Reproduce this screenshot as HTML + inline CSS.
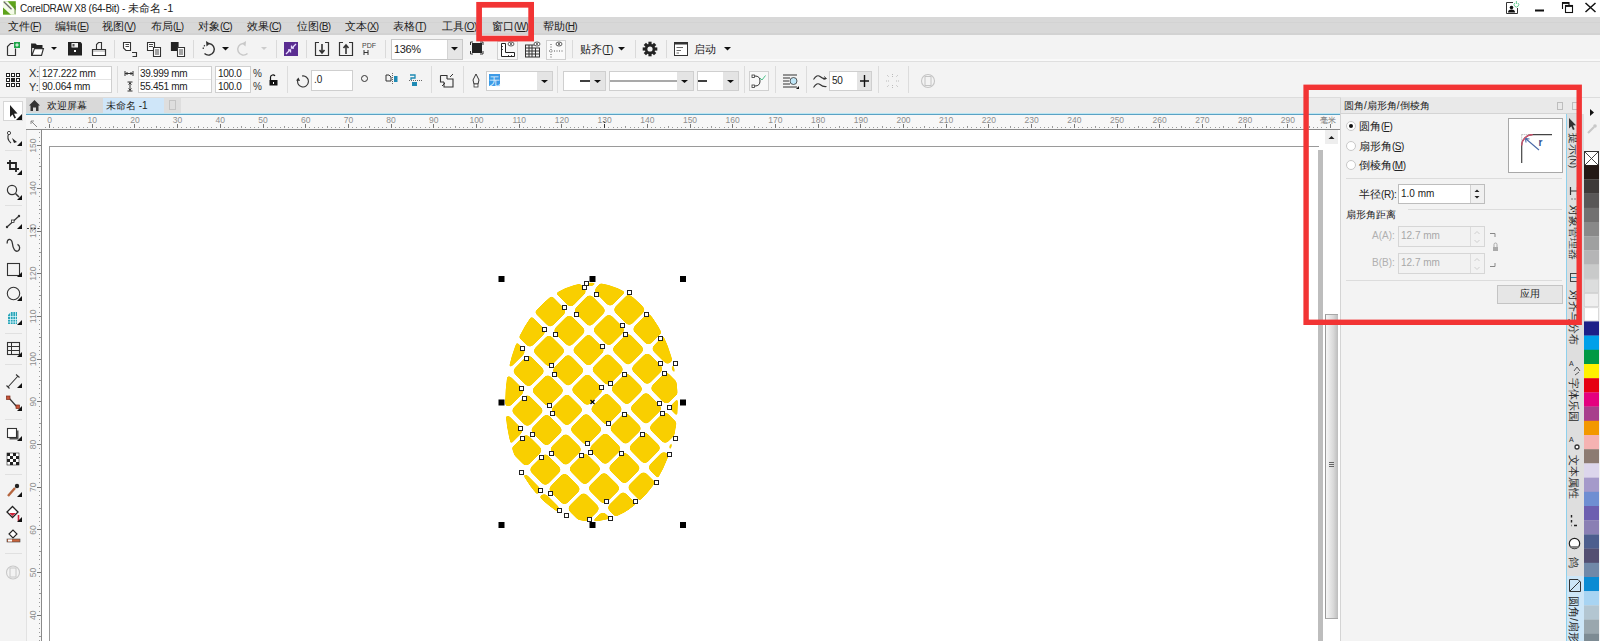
<!DOCTYPE html>
<html><head><meta charset="utf-8">
<style>
*{margin:0;padding:0;box-sizing:border-box}
html,body{width:1600px;height:641px;overflow:hidden;background:#fff;font-family:"Liberation Sans",sans-serif;color:#222}
.a{position:absolute}
.t{position:absolute;white-space:nowrap;font-size:11px;line-height:12px}
</style></head><body>
<!-- title bar -->
<div class="a" style="left:0;top:0;width:1600px;height:17px;background:#fff"></div>
<!-- menu bar -->
<div class="a" style="left:0;top:17px;width:1600px;height:18px;background:#d8d8d8"></div><div class="a" style="left:0;top:22px;width:1600px;height:1px;background:#d3d3d3"></div><div class="a" style="left:0;top:33px;width:1600px;height:2px;background:#d2d2d2"></div>

<!-- app icon -->
<svg class="a" style="left:0;top:0" width="18" height="17" viewBox="0 0 18 17"><rect x="3" y="1.2" width="12.8" height="13.5" fill="#5ea31c"/><path d="M3 1.2 H7.5 L15.8 10.5 V14.7 H11 L3 7.5 Z" fill="#f4fbe8"/><path d="M3.8 1.8 L11.5 9.3" stroke="#6b6b6b" stroke-width="1.3"/><path d="M15 6 V14" stroke="#4a7a2a" stroke-width="0.8"/></svg>
<div class="t" style="left:20px;top:2px;font-size:11px;color:#222"><span style="font-size:10px;letter-spacing:-0.25px">CorelDRAW X8 (64-Bit) - </span>未命名 -1</div>
<!-- window controls -->
<svg class="a" style="left:1500px;top:0" width="100" height="17" viewBox="1500 0 100 17">
 <path d="M1513 2.5 H1506.5 V13.5 H1517.5 V8" fill="none" stroke="#333" stroke-width="1"/>
 <circle cx="1511.5" cy="7.5" r="1.8" fill="#111"/>
 <path d="M1508 12.5 Q1508 9.5 1511.5 9.5 Q1515 9.5 1515 12.5 Z" fill="#111"/>
 <path d="M1514.8 3 A2.3 2.3 0 1 0 1518 3" fill="none" stroke="#5cc98a" stroke-width="0.9"/><path d="M1516.4 1 V4" stroke="#5cc98a" stroke-width="0.9"/>
 <rect x="1535" y="9.5" width="9" height="2" fill="#111"/>
 <path d="M1562.5 9 V2.5 H1569 V5.5" fill="none" stroke="#111" stroke-width="1.1"/><rect x="1562.5" y="2.3" width="6.5" height="1.6" fill="#111"/>
 <rect x="1565.5" y="5.5" width="7" height="7" fill="#fff" stroke="#111" stroke-width="1.1"/><rect x="1565.5" y="5.3" width="7" height="1.6" fill="#111"/>
 <path d="M1585.5 3 L1595.5 12 M1595.5 3 L1585.5 12" stroke="#111" stroke-width="1.5"/>
</svg>
<!-- menu -->
<div class="t" style="left:8px;top:20px;font-size:11px">文件<span style="font-size:10px;letter-spacing:-0.6px">(<u>F</u>)</span></div>
<div class="t" style="left:55px;top:20px;font-size:11px">编辑<span style="font-size:10px;letter-spacing:-0.6px">(<u>E</u>)</span></div>
<div class="t" style="left:102px;top:20px;font-size:11px">视图<span style="font-size:10px;letter-spacing:-0.6px">(<u>V</u>)</span></div>
<div class="t" style="left:151px;top:20px;font-size:11px">布局<span style="font-size:10px;letter-spacing:-0.6px">(<u>L</u>)</span></div>
<div class="t" style="left:198px;top:20px;font-size:11px">对象<span style="font-size:10px;letter-spacing:-0.6px">(<u>C</u>)</span></div>
<div class="t" style="left:247px;top:20px;font-size:11px">效果<span style="font-size:10px;letter-spacing:-0.6px">(<u>C</u>)</span></div>
<div class="t" style="left:297px;top:20px;font-size:11px">位图<span style="font-size:10px;letter-spacing:-0.6px">(<u>B</u>)</span></div>
<div class="t" style="left:345px;top:20px;font-size:11px">文本<span style="font-size:10px;letter-spacing:-0.6px">(<u>X</u>)</span></div>
<div class="t" style="left:393px;top:20px;font-size:11px">表格<span style="font-size:10px;letter-spacing:-0.6px">(<u>T</u>)</span></div>
<div class="t" style="left:442px;top:20px;font-size:11px">工具<span style="font-size:10px;letter-spacing:-0.6px">(<u>O</u>)</span></div>
<div class="t" style="left:492px;top:20px;font-size:11px">窗口<span style="font-size:10px;letter-spacing:-0.6px">(<u>W</u>)</span></div>
<div class="t" style="left:543px;top:20px;font-size:11px">帮助<span style="font-size:10px;letter-spacing:-0.6px">(<u>H</u>)</span></div>
<!-- toolbar 1 -->
<div class="a" style="left:0;top:35px;width:1600px;height:27px;background:#f3f3f3;border-bottom:1px solid #dfdfdf"></div><div class="a" style="left:0;top:59px;width:1600px;height:2px;background:#f9f9f9"></div>
<!-- property bar -->
<div class="a" style="left:0;top:62px;width:1600px;height:36px;background:#f3f3f3;border-bottom:1px solid #dcdcdc"></div>

<!-- toolbar1 icons -->
<svg class="a" style="left:0;top:35px" width="800" height="26" viewBox="0 35 800 26">
<g fill="none" stroke="#333" stroke-width="1.2">
 <!-- new -->
 <path d="M7.5 55.5 V46.5 L10.5 43.5 H13.5 M15.5 48.5 V55.5 H7.5" stroke-width="1.2"/>
 <rect x="14" y="42" width="6" height="6" fill="#1fa64a" stroke="none"/>
 <path d="M17 43.3 V46.7 M15.3 45 H18.7" stroke="#fff" stroke-width="1"/>
 <!-- open -->
 <path d="M31 43.5 H35.5 L37 45 H42.5 V48 H31 Z" fill="#222" stroke="none"/>
 <path d="M31.6 44 V55.4 H41.5 L43.4 48.6 H34.5 L32 55.4" stroke-width="1.2" fill="#fff"/>
 <path d="M51 47 H57 L54 50 Z" fill="#111" stroke="none"/>
 <!-- save -->
 <path d="M68 42 H80.5 L82 43.5 V55.5 H68 Z" fill="#222" stroke="none"/>
 <rect x="71.5" y="43" width="6.5" height="4.5" fill="#f3f3f3" stroke="none"/>
 <rect x="72.5" y="44" width="2" height="2.5" fill="#555" stroke="none"/>
 <rect x="74" y="50" width="2" height="2" fill="#fff" stroke="none"/>
 <!-- print -->
 <path d="M96.5 50 V44.5 L98.5 42.5 H101.5 V50" stroke-width="1.1"/>
 <path d="M92.5 49.5 H105.5 V55.5 H92.5 Z" stroke-width="1.2" fill="#fff"/>
 <path d="M93 51 H105" stroke="#888" stroke-width="0.8"/>
 <!-- separators -->
 <path d="M114.5 40 V58 M193.5 40 V58 M276.5 40 V58 M306.5 40 V58 M385.5 40 V58 M572.5 40 V58 M635.5 40 V58 M666.5 40 V58" stroke="#dadada" stroke-width="1"/>
 <!-- import-ish docs -->
 <path d="M123.5 42.5 H130.5 V50.5 H126 L123.5 48 Z" fill="#fff" stroke-width="1.1"/>
 <path d="M125.5 44.5 H129 M125.5 46.5 H129" stroke-width="0.9"/>
 <path d="M132 52.5 H136.5 V56.5 H132.5" stroke-width="1.1"/>
 <path d="M147.5 42.5 H154.5 V50.5 H147.5 Z" fill="#fff" stroke-width="1.1"/>
 <path d="M149 44.5 H153 M149 46.5 H153" stroke-width="0.9"/>
 <path d="M153.5 47.5 H160.5 V56.5 H153.5 Z" fill="#fff" stroke-width="1.1"/>
 <path d="M155 50 H159 M155 52 H159 M155 54 H159" stroke-width="0.9"/>
 <path d="M171.5 42.5 H178 V50.5 H171.5 Z" fill="#222" stroke="#222"/>
 <path d="M177.5 47.5 H184.5 V56.5 H177.5 Z" fill="#fff" stroke-width="1.1"/>
 <path d="M179 50 H183 M179 52 H183 M179 54 H183" stroke-width="0.9"/>
 <!-- undo -->
 <path d="M209 43.5 A5.8 5.8 0 1 1 204.5 53.5" stroke-width="1.4"/>
 <path d="M203.2 49 A5.8 5.8 0 0 1 205 45" stroke-width="1.2" stroke-dasharray="1.5 1.2"/>
 <path d="M206 41 L210 43.5 L206.5 46.5 Z" fill="#333" stroke="none"/>
 <path d="M222 47 H229 L225.5 50.5 Z" fill="#111" stroke="none"/>
 <!-- redo disabled -->
 <path d="M243 43.5 A5.8 5.8 0 1 0 247.5 53.5" stroke="#c8c8c8" stroke-width="1.4"/><path d="M246 41 L242 43.5 L245.5 46.5 Z" fill="#c8c8c8" stroke="none"/>
 <path d="M261 47 H267 L264 50 Z" fill="#ccc" stroke="none"/>
 <!-- purple -->
 <rect x="284" y="42" width="14" height="14" fill="#5a2d91" stroke="none"/>
 <path d="M286 54 L290 50 M296 44 L292 48" stroke="#e8dcff" stroke-width="1.3"/><path d="M288 50 H290.5 V52.5 M294 48 H291.5 V45.5" stroke="#e8dcff" stroke-width="1.3"/>
 <!-- import/export -->
 <path d="M319 42.5 H315.5 V55.5 H328.5 V42.5 H325" stroke-width="1.2"/>
 <path d="M322 44 V52 M319.5 50 L322 53 L324.5 50" stroke-width="1.6"/>
 <path d="M343 42.5 H339.5 V55.5 H352.5 V42.5 H349" stroke-width="1.2"/>
 <path d="M346 46 V54 M343.5 48 L346 45 L348.5 48" stroke-width="1.6"/>
 <!-- pdf -->
 <text x="362" y="48" font-size="7" font-family="Liberation Sans" fill="#444" stroke="none">PDF</text>
 <path d="M364 50 V55 M368 50 V55 M364 52.5 H368" stroke-width="1"/>
</g>
</svg>
<!-- zoom box -->
<div class="a" style="left:391px;top:39px;width:72px;height:21px;background:#fff;border:1px solid #c8c8c8"></div>
<div class="a" style="left:447px;top:40px;width:15px;height:19px;background:#e6e6e6;border-left:1px solid #d4d4d4"></div>
<div class="t" style="left:394px;top:43px;font-size:11px;letter-spacing:-0.4px;color:#222">136%</div>
<svg class="a" style="left:447px;top:40px" width="15" height="19"><path d="M4 7 H11 L7.5 10.5 Z" fill="#111"/></svg>
<svg class="a" style="left:460px;top:35px" width="300" height="26" viewBox="460 35 300 26">
 <!-- fullscreen -->
 <rect x="472" y="43" width="10" height="10" fill="#222"/>
 <path d="M470.5 45 V42 H473 M480 42 H483 V45 M483 51 V54 H480 M473 54 H470.5 V51" fill="none" stroke="#333"/>
 <!-- rulers (selected) -->
 <rect x="497.5" y="41.5" width="20" height="18" fill="#f8f8f8" stroke="#d0d0d0"/>
 <path d="M501.5 43.5 V56.5 H514.5 V52.5 H505.5 V43.5 Z" fill="#fff" stroke="#222" stroke-width="1"/>
 <path d="M501.5 46.5 H503 M501.5 49.5 H503 M508.5 56.5 V55 M511.5 56.5 V55" stroke="#222" stroke-width="0.8"/>
 <ellipse cx="511" cy="44" rx="3" ry="2" fill="#fff" stroke="#333" stroke-width="0.8"/><circle cx="511" cy="44" r="0.9" fill="#333"/>
 <!-- grid -->
 <path d="M525 45 H537 M525 48 H540 M525 51 H540 M525 54 H540 M525 57 H540 M525.5 45 V57 M529 45 V57 M532 45 V57 M535.5 48 V57 M539.5 48 V57" fill="none" stroke="#333" stroke-width="1"/>
 <ellipse cx="537" cy="44" rx="3" ry="2" fill="#fff" stroke="#333" stroke-width="0.8"/><circle cx="537" cy="44" r="0.9" fill="#333"/>
 <!-- guides -->
 <rect x="546.5" y="40.5" width="19" height="19" fill="#fafafa" stroke="#d0d0d0"/>
 <path d="M551 44 V58 M549 51 H563" fill="none" stroke="#555" stroke-dasharray="1 1.5"/>
 <ellipse cx="559" cy="44" rx="3" ry="2" fill="#fff" stroke="#333" stroke-width="0.8"/><circle cx="559" cy="44" r="0.9" fill="#333"/>
 <!-- snap arrow -->
 <path d="M618 47 H625 L621.5 50.5 Z" fill="#111"/>
 <!-- gear -->
 <g transform="translate(650 49)">
  <circle r="5.2" fill="#222"/>
  <g fill="#222"><rect x="-1.6" y="-7.3" width="3.2" height="3"/><rect x="-1.6" y="4.3" width="3.2" height="3"/><rect x="-7.3" y="-1.6" width="3" height="3.2"/><rect x="4.3" y="-1.6" width="3" height="3.2"/>
  <g transform="rotate(45)"><rect x="-1.6" y="-7.3" width="3.2" height="3"/><rect x="-1.6" y="4.3" width="3.2" height="3"/><rect x="-7.3" y="-1.6" width="3" height="3.2"/><rect x="4.3" y="-1.6" width="3" height="3.2"/></g></g>
  <circle r="2.6" fill="#f2f2f2"/>
 </g>
 <!-- window icon -->
 <rect x="674.5" y="42.5" width="13" height="13" fill="#fff" stroke="#333"/>
 <rect x="674.5" y="42.5" width="13" height="2" fill="#333"/>
 <path d="M676.5 47.5 H683 M676.5 50.5 H681 M676.5 53 H679" stroke="#444" stroke-width="0.8"/>
 <path d="M724 47 H731 L727.5 50.5 Z" fill="#111"/>
</svg>
<div class="t" style="left:580px;top:43px;font-size:11px">贴齐<span style="font-size:10px;letter-spacing:-0.6px">(<u>T</u>)</span></div>
<div class="t" style="left:694px;top:43px;font-size:11px">启动</div>

<!-- property bar content -->
<svg class="a" style="left:0;top:61px" width="960" height="36" viewBox="0 61 960 36">
 <!-- align grid -->
 <g fill="#fff" stroke="#222" stroke-width="1">
  <rect x="6.5" y="73.5" width="3" height="3"/><rect x="11.5" y="73.5" width="3" height="3"/><rect x="16.5" y="73.5" width="3" height="3"/>
  <rect x="6.5" y="78.5" width="3" height="3"/><rect x="11.5" y="78.5" width="3" height="3" fill="#222"/><rect x="16.5" y="78.5" width="3" height="3"/>
  <rect x="6.5" y="83.5" width="3" height="3"/><rect x="11.5" y="83.5" width="3" height="3"/><rect x="16.5" y="83.5" width="3" height="3"/>
 </g>
 <!-- width/height icons -->
 <path d="M125 73.5 H133 M125 71 V76 M133 71 V76 M126 73.5 L127.5 72 M126 73.5 L127.5 75 M132 73.5 L130.5 72 M132 73.5 L130.5 75" stroke="#333" stroke-width="1" fill="none"/>
 <path d="M130 82 V91 M127.5 82 H132.5 M127.5 91 H132.5 M130 83 L128.5 84.5 M130 83 L131.5 84.5 M130 90 L128.5 88.5 M130 90 L131.5 88.5" stroke="#333" stroke-width="1" fill="none"/>
 <!-- lock -->
 <rect x="269.5" y="80" width="8" height="5.5" fill="#111"/>
 <path d="M270.5 80 V77 A2.5 2.5 0 0 1 275 76" fill="none" stroke="#111" stroke-width="1.2"/>
 <rect x="273" y="82" width="1" height="2" fill="#fff"/>
 <!-- separators -->
 <path d="M117.5 66 V93 M287.5 66 V93 M431.5 66 V93 M463.5 66 V93 M557.5 66 V93 M744.5 66 V93 M775.5 66 V93 M806.5 66 V93 M878.5 66 V93 M908.5 66 V93" stroke="#dcdcdc"/>
 <!-- rotate -->
 <path d="M298 79 A5.5 5.5 0 1 0 302 76" fill="none" stroke="#333" stroke-width="1.1"/>
 <path d="M296 80.5 L298.5 77.5 L300 81 Z" fill="#333"/>
 <circle cx="364.5" cy="78.5" r="3" fill="none" stroke="#333" stroke-width="1"/>
 <!-- mirror -->
 <path d="M386 75 H389 L391 77 V81 H386 Z" fill="none" stroke="#333" stroke-width="1"/>
 <path d="M392.5 73 V85" stroke="#666" stroke-dasharray="1 1"/>
 <rect x="394" y="76" width="3.5" height="6" fill="#1e8ab4"/>
 <path d="M410 75 H415 V78 H411 V80" fill="none" stroke="#1e8ab4" stroke-width="1.3"/>
 <path d="M409 80.5 H422" stroke="#666" stroke-dasharray="1 1"/>
 <rect x="412" y="82" width="5" height="4" fill="#1e8ab4"/>
 <!-- transform icon -->
 <path d="M440.5 75.5 H447 V79 M440.5 75.5 V82 H444 M444 82 V87 H453 V79 H447" fill="none" stroke="#333" stroke-width="1.1"/>
 <path d="M450 77 L453 74 M442 86 L445 83" stroke="#333" stroke-width="1"/>
 <!-- pen -->
 <path d="M476 74 L479 80 L478 84 H474 L473 80 Z" fill="none" stroke="#333" stroke-width="1"/>
 <rect x="474" y="84" width="4" height="3" fill="#fff" stroke="#333" stroke-width="0.8"/>
 <!-- outline color dropdown -->
 <rect x="486.5" y="71.5" width="66" height="19" fill="#fff" stroke="#cfcfcf"/>
 <rect x="537" y="72" width="15" height="18" fill="#e4e4e4"/>
 <rect x="489" y="74" width="11" height="12" fill="#3d9ae6"/>
 <text x="489" y="84.5" font-size="11" fill="#dff0ff" font-family="Liberation Sans">无</text>
 <path d="M541 80 H548 L544.5 83 Z" fill="#111"/>
 <!-- line start -->
 <rect x="563.5" y="71.5" width="42" height="19" fill="#fff" stroke="#cfcfcf"/>
 <rect x="590" y="72" width="15" height="18" fill="#e4e4e4"/>
 <path d="M580 81 H590" stroke="#111" stroke-width="1.6"/>
 <path d="M594 80 H601 L597.5 83 Z" fill="#111"/>
 <!-- line style -->
 <rect x="609.5" y="71.5" width="84" height="19" fill="#fff" stroke="#cfcfcf"/>
 <rect x="677" y="72" width="16" height="18" fill="#e4e4e4"/>
 <path d="M610 81 H677" stroke="#555" stroke-width="1.2"/>
 <path d="M681 80 H688 L684.5 83 Z" fill="#111"/>
 <!-- line end -->
 <rect x="697.5" y="71.5" width="41" height="19" fill="#fff" stroke="#cfcfcf"/>
 <rect x="723" y="72" width="15" height="18" fill="#e4e4e4"/>
 <path d="M698 81 H707" stroke="#111" stroke-width="1.6"/>
 <path d="M727 80 H734 L730.5 83 Z" fill="#111"/>
 <!-- close curve icon -->
 <rect x="749.5" y="71.5" width="19" height="19" fill="#f8f8f8" stroke="#d0d0d0"/>
 <rect x="752" y="75" width="2.5" height="2.5" fill="#fff" stroke="#333" stroke-width="0.8"/>
 <rect x="752" y="85" width="2.5" height="2.5" fill="#fff" stroke="#333" stroke-width="0.8"/>
 <path d="M755 76 Q760 76 760 81 Q760 86 755 86" fill="none" stroke="#333"/>
 <path d="M760 78 L762 80 L765.5 75.5" fill="none" stroke="#4cc08a" stroke-width="1"/>
 <!-- wrap -->
 <path d="M783 75 H797 M783 78 H790 M783 81 H789 M783 84 H790 M783 87 H797" stroke="#333" stroke-width="1"/>
 <circle cx="793.5" cy="81" r="3.5" fill="#bfe6f7" stroke="#333" stroke-width="0.8"/>
 <path d="M796 89 L799 89 L799 86 Z" fill="#111"/>
 <!-- smooth -->
 <path d="M813.5 79.5 Q817 74 820 76.5 Q823 79 826 78.5 M813.5 87.5 Q817 82 820 84.5 Q823 87 826.5 86.5" fill="none" stroke="#333" stroke-width="1.1"/><path d="M824 76.5 L826.5 78.5 L823.5 79.5" fill="none" stroke="#333" stroke-width="0.9"/>
 <rect x="829.5" y="71.5" width="42" height="19" fill="#fff" stroke="#cfcfcf"/>
 <rect x="857" y="72" width="14" height="18" fill="#e4e4e4"/>
 <path d="M864.5 75 V87 M860 81 H869" stroke="#111" stroke-width="1.4"/>
 <!-- disabled icons -->
 <path d="M887 75 L889 77 M898 75 L896 77 M887 87 L889 85 M898 87 L896 85 M892.5 74 V77 M892.5 85 V88 M886 81 H889 M896 81 H899" stroke="#bbb" stroke-width="1" stroke-dasharray="1 1"/>
 <circle cx="928" cy="81" r="6.5" fill="none" stroke="#c4c4c4" stroke-width="1.1"/>
 <rect x="925" y="76.5" width="6" height="9" fill="none" stroke="#c4c4c4" stroke-width="1"/>
</svg>
<!-- XY boxes -->
<div class="t" style="left:29px;top:67px;font-size:11px;color:#333">X:</div>
<div class="t" style="left:29px;top:81px;font-size:11px;color:#333">Y:</div>
<div class="a" style="left:39px;top:66px;width:73px;height:27px;background:#fff;border:1px solid #cfcfcf"></div>
<div class="a" style="left:40px;top:79px;width:71px;height:1px;background:#e4e4e4"></div>
<div class="t" style="left:42px;top:68px;font-size:10px;letter-spacing:-0.2px;color:#222">127.222 mm</div>
<div class="t" style="left:42px;top:81px;font-size:10px;letter-spacing:-0.2px;color:#222">90.064 mm</div>
<div class="a" style="left:138px;top:66px;width:74px;height:27px;background:#fff;border:1px solid #cfcfcf"></div>
<div class="a" style="left:139px;top:79px;width:72px;height:1px;background:#e4e4e4"></div>
<div class="t" style="left:140px;top:68px;font-size:10px;letter-spacing:-0.3px;color:#222">39.999 mm</div>
<div class="t" style="left:140px;top:81px;font-size:10px;letter-spacing:-0.3px;color:#222">55.451 mm</div>
<div class="a" style="left:215px;top:66px;width:36px;height:27px;background:#fff;border:1px solid #cfcfcf"></div>
<div class="a" style="left:216px;top:79px;width:34px;height:1px;background:#e4e4e4"></div>
<div class="t" style="left:218px;top:68px;font-size:10px;letter-spacing:-0.3px;color:#222">100.0</div>
<div class="t" style="left:218px;top:81px;font-size:10px;letter-spacing:-0.3px;color:#222">100.0</div>
<div class="t" style="left:253px;top:68px;font-size:10px;color:#333">%</div>
<div class="t" style="left:253px;top:81px;font-size:10px;color:#333">%</div>
<div class="a" style="left:311px;top:70px;width:42px;height:21px;background:#fff;border:1px solid #cfcfcf"></div>
<div class="t" style="left:314px;top:74px;font-size:10px;color:#222">.0</div>
<div class="t" style="left:832px;top:75px;font-size:10px;letter-spacing:-0.3px;color:#222">50</div>
<!-- toolbox -->
<div class="a" style="left:0;top:98px;width:26px;height:543px;background:#f3f3f3"></div>
<!-- tab bar -->
<div class="a" style="left:26px;top:98px;width:1314px;height:15px;background:#ebebeb"></div>
<div class="a" style="left:26px;top:113px;width:1314px;height:1px;background:#bde6f2"></div><div class="a" style="left:26px;top:114px;width:1314px;height:1px;background:#5aa2c4"></div>


<!-- toolbox icons -->
<svg class="a" style="left:0;top:97px" width="26" height="544" viewBox="0 97 26 544">
 <rect x="3.5" y="101.5" width="19" height="19" fill="#fff" stroke="#d6d6d6"/>
 <path d="M10 105 L10 117 L12.5 114.5 L14.5 118.5 L16 117.8 L14 113.8 L17.5 113.5 Z" fill="#222"/>
 <path d="M22 114 V120 H16 Z" fill="#111"/>
 <!-- shape -->
 <path d="M9 133 Q6 139 11 143" fill="none" stroke="#333" stroke-width="1.1"/>
 <circle cx="9" cy="133" r="1.6" fill="#fff" stroke="#333" stroke-width="0.9"/>
 <path d="M12 138 L17 142 L14 143 Z" fill="#222"/>
 <path d="M22 141 V146 H17 Z" fill="#111"/>
 <path d="M5 150.5 H22" stroke="#e0e0e0"/>
 <!-- crop -->
 <path d="M10 160 V169 H19 M7 163 H16 V172" fill="none" stroke="#222" stroke-width="1.8"/>
 <path d="M22 170 V175 H17 Z" fill="#111"/>
 <!-- zoom -->
 <circle cx="12" cy="190" r="4.6" fill="none" stroke="#333" stroke-width="1.2"/>
 <path d="M15.5 193.5 L19 197" stroke="#333" stroke-width="1.5"/>
 <path d="M22 195 V200 H17 Z" fill="#111"/>
 <path d="M5 205.5 H22" stroke="#e0e0e0"/>
 <!-- freehand -->
 <path d="M7 227 L19 216" stroke="#333" stroke-width="1.2"/>
 <circle cx="7" cy="227" r="1.2" fill="#333"/><circle cx="19" cy="216" r="1.2" fill="#333"/>
 <rect x="11.5" y="220" width="2.5" height="2.5" fill="#fff" stroke="#333" stroke-width="0.8"/>
 <path d="M22 224 V229 H17 Z" fill="#111"/>
 <!-- artistic curve -->
 <path d="M7.3 243.5 C6.3 239 11.5 237.5 12.3 243 C13 249.5 15.5 252 18 251 C20.5 249.5 20 245.5 17.5 244.3" fill="none" stroke="#333" stroke-width="1.3"/>
 <!-- rect -->
 <rect x="7.5" y="263.5" width="12" height="12" fill="none" stroke="#333" stroke-width="1.1"/>
 <path d="M22 272 V277 H17 Z" fill="#111"/>
 <!-- ellipse -->
 <circle cx="13.5" cy="293.5" r="6.2" fill="none" stroke="#333" stroke-width="1.1"/>
 <path d="M22 296 V301 H17 Z" fill="#111"/>
 <!-- graph paper -->
 <path d="M8 324 V315 L11 312 H17 V324 Z" fill="#29a5b8"/>
 <path d="M8 316.5 H17 M8 319.5 H17 M8 322 H17 M10.5 312 V324 M13 312 V324 M15.5 312 V324" stroke="#e8fbff" stroke-width="0.7"/>
 <path d="M22 320 V325 H17 Z" fill="#111"/>
 <path d="M5 333.5 H22" stroke="#e0e0e0"/>
 <!-- table -->
 <rect x="7.5" y="342.5" width="12" height="12" fill="none" stroke="#333" stroke-width="1.1"/>
 <path d="M7.5 346.5 H19.5 M7.5 350.5 H19.5 M11.5 342.5 V354.5" stroke="#333" stroke-width="1"/>
 <path d="M22 352 V357 H17 Z" fill="#111"/>
 <path d="M5 364.5 H22" stroke="#e0e0e0"/>
 <!-- dimension -->
 <path d="M8 387 L18 376 M16 374.5 L19.5 377.5 M6.5 385.5 L9.5 388.5" stroke="#333" stroke-width="1.1"/>
 <path d="M22 383 V388 H17 Z" fill="#111"/>
 <!-- connector -->
 <path d="M9 398 L17 407" stroke="#333" stroke-width="1.2"/>
 <rect x="6.5" y="396" width="3.5" height="3.5" fill="#c8553a" stroke="#7a2a18" stroke-width="0.7"/>
 <rect x="16" y="405" width="3.5" height="3.5" fill="#c8553a" stroke="#7a2a18" stroke-width="0.7"/>
 <path d="M22 406 V411 H17 Z" fill="#111"/>
 <path d="M5 419.5 H22" stroke="#e0e0e0"/>
 <!-- shadow -->
 <rect x="9.5" y="430.5" width="9" height="9" fill="#555"/>
 <rect x="7.5" y="428.5" width="9" height="9" fill="#fff" stroke="#333" stroke-width="1.1"/>
 <path d="M22 436 V441 H17 Z" fill="#111"/>
 <!-- transparency -->
 <rect x="7" y="453" width="12" height="12" fill="#fff" stroke="#222" stroke-width="0.6"/>
 <g fill="#222"><rect x="7" y="453" width="3" height="3"/><rect x="13" y="453" width="3" height="3"/><rect x="10" y="456" width="3" height="3"/><rect x="16" y="456" width="3" height="3"/><rect x="7" y="459" width="3" height="3"/><rect x="13" y="459" width="3" height="3"/><rect x="10" y="462" width="3" height="3"/><rect x="16" y="462" width="3" height="3"/></g>
 <path d="M5 474.5 H22" stroke="#e0e0e0"/>
 <!-- eyedropper -->
 <path d="M8 496 L15 488" stroke="#b5653e" stroke-width="2.4"/>
 <circle cx="17" cy="486" r="2.2" fill="#222"/>
 <path d="M22 492 V497 H17 Z" fill="#111"/>
 <!-- fill -->
 <path d="M7 512 L12.5 506.5 L18 512 L12.5 517.5 Z" fill="#fff" stroke="#222" stroke-width="1.3"/>
 <path d="M9 513 H16 L12.5 516 Z" fill="#d0243a"/>
 <path d="M18.5 515 V521" stroke="#d0243a" stroke-width="1.6"/>
 <path d="M22 517 V522 H17 Z" fill="#111"/>
 <!-- smart fill -->
 <path d="M9 534 L13 530 L17 534 L13 538 Z" fill="#fff" stroke="#222" stroke-width="1.1"/>
 <rect x="7" y="539" width="13" height="3" fill="#c8653e" stroke="#444" stroke-width="0.6"/>
 <rect x="8" y="539.5" width="4" height="2" fill="#fff"/>
 <path d="M5 553.5 H22" stroke="#e0e0e0"/>
 <!-- add -->
 <circle cx="13" cy="572.5" r="6.5" fill="none" stroke="#c8c8c8" stroke-width="1.1"/>
 <rect x="10" y="568" width="6" height="9" fill="none" stroke="#c8c8c8"/>
</svg>
<!-- tabs -->
<div class="a" style="left:26px;top:98px;width:77px;height:15px;background:#d9d9d9"></div>
<svg class="a" style="left:28px;top:99px" width="13" height="13" viewBox="0 0 13 13"><path d="M1 6.5 L6.5 1 L12 6.5 H10.5 V12 H8 V8.5 H5 V12 H2.5 V6.5 Z" fill="#333"/></svg>
<div class="t" style="left:47px;top:100px;font-size:10px;color:#222">欢迎屏幕</div>
<div class="a" style="left:103px;top:98px;width:61px;height:15px;background:#cfe6f9"></div>
<div class="t" style="left:106px;top:100px;font-size:10px;color:#222">未命名 -1</div>
<div class="a" style="left:164px;top:98px;width:17px;height:15px;background:#dedede"></div>
<div class="a" style="left:169px;top:100px;width:7px;height:10px;border:1px solid #c4c4c4"></div>
<!-- h ruler -->
<div class="a" style="left:26px;top:115px;width:1314px;height:15px;background:#f7f7f7;border-bottom:1px solid #8a8a8a"></div>
<!-- v ruler -->
<div class="a" style="left:26px;top:130px;width:16px;height:511px;background:#f7f7f7;border-right:1px solid #8a8a8a;border-left:1px solid #e2e2e2"></div>
<svg class="a" style="left:26px;top:115px" width="1314" height="14" viewBox="26 115 1314 14">
<g fill="#8e8e8e" font-family="Liberation Sans" font-size="8.5" text-anchor="middle">
<text x="49.5" y="123">0</text>
<text x="92.2" y="123">10</text>
<text x="134.9" y="123">20</text>
<text x="177.6" y="123">30</text>
<text x="220.3" y="123">40</text>
<text x="263.0" y="123">50</text>
<text x="305.7" y="123">60</text>
<text x="348.4" y="123">70</text>
<text x="391.1" y="123">80</text>
<text x="433.8" y="123">90</text>
<text x="476.5" y="123">100</text>
<text x="519.2" y="123">110</text>
<text x="561.9" y="123">120</text>
<text x="604.6" y="123">130</text>
<text x="647.3" y="123">140</text>
<text x="690.0" y="123">150</text>
<text x="732.7" y="123">160</text>
<text x="775.4" y="123">170</text>
<text x="818.1" y="123">180</text>
<text x="860.8" y="123">190</text>
<text x="903.5" y="123">200</text>
<text x="946.2" y="123">210</text>
<text x="988.9" y="123">220</text>
<text x="1031.6" y="123">230</text>
<text x="1074.3" y="123">240</text>
<text x="1117.0" y="123">250</text>
<text x="1159.7" y="123">260</text>
<text x="1202.4" y="123">270</text>
<text x="1245.1" y="123">280</text>
<text x="1287.8" y="123">290</text>
</g><g stroke="#777" stroke-width="1">
<path d="M49.5 124 V128"/>
<path d="M70.5 126 V128" stroke="#999"/>
<path d="M92.5 124 V128"/>
<path d="M113.5 126 V128" stroke="#999"/>
<path d="M134.5 124 V128"/>
<path d="M156.5 126 V128" stroke="#999"/>
<path d="M177.5 124 V128"/>
<path d="M198.5 126 V128" stroke="#999"/>
<path d="M220.5 124 V128"/>
<path d="M241.5 126 V128" stroke="#999"/>
<path d="M263.5 124 V128"/>
<path d="M284.5 126 V128" stroke="#999"/>
<path d="M305.5 124 V128"/>
<path d="M327.5 126 V128" stroke="#999"/>
<path d="M348.5 124 V128"/>
<path d="M369.5 126 V128" stroke="#999"/>
<path d="M391.5 124 V128"/>
<path d="M412.5 126 V128" stroke="#999"/>
<path d="M433.5 124 V128"/>
<path d="M455.5 126 V128" stroke="#999"/>
<path d="M476.5 124 V128"/>
<path d="M497.5 126 V128" stroke="#999"/>
<path d="M519.5 124 V128"/>
<path d="M540.5 126 V128" stroke="#999"/>
<path d="M561.5 124 V128"/>
<path d="M583.5 126 V128" stroke="#999"/>
<path d="M604.5 124 V128"/>
<path d="M625.5 126 V128" stroke="#999"/>
<path d="M647.5 124 V128"/>
<path d="M668.5 126 V128" stroke="#999"/>
<path d="M690.5 124 V128"/>
<path d="M711.5 126 V128" stroke="#999"/>
<path d="M732.5 124 V128"/>
<path d="M754.5 126 V128" stroke="#999"/>
<path d="M775.5 124 V128"/>
<path d="M796.5 126 V128" stroke="#999"/>
<path d="M818.5 124 V128"/>
<path d="M839.5 126 V128" stroke="#999"/>
<path d="M860.5 124 V128"/>
<path d="M882.5 126 V128" stroke="#999"/>
<path d="M903.5 124 V128"/>
<path d="M924.5 126 V128" stroke="#999"/>
<path d="M946.5 124 V128"/>
<path d="M967.5 126 V128" stroke="#999"/>
<path d="M988.5 124 V128"/>
<path d="M1010.5 126 V128" stroke="#999"/>
<path d="M1031.5 124 V128"/>
<path d="M1052.5 126 V128" stroke="#999"/>
<path d="M1074.5 124 V128"/>
<path d="M1095.5 126 V128" stroke="#999"/>
<path d="M1117.5 124 V128"/>
<path d="M1138.5 126 V128" stroke="#999"/>
<path d="M1159.5 124 V128"/>
<path d="M1181.5 126 V128" stroke="#999"/>
<path d="M1202.5 124 V128"/>
<path d="M1223.5 126 V128" stroke="#999"/>
<path d="M1245.5 124 V128"/>
<path d="M1266.5 126 V128" stroke="#999"/>
<path d="M1287.5 124 V128"/>
<path d="M1309.5 126 V128" stroke="#999"/>
<path d="M1330.5 124 V128"/>
</g><g fill="#9a9a9a">
<rect x="45" y="127" width="1" height="1"/>
<rect x="53" y="127" width="1" height="1"/>
<rect x="58" y="127" width="1" height="1"/>
<rect x="62" y="127" width="1" height="1"/>
<rect x="66" y="127" width="1" height="1"/>
<rect x="75" y="127" width="1" height="1"/>
<rect x="79" y="127" width="1" height="1"/>
<rect x="83" y="127" width="1" height="1"/>
<rect x="87" y="127" width="1" height="1"/>
<rect x="96" y="127" width="1" height="1"/>
<rect x="100" y="127" width="1" height="1"/>
<rect x="105" y="127" width="1" height="1"/>
<rect x="109" y="127" width="1" height="1"/>
<rect x="117" y="127" width="1" height="1"/>
<rect x="122" y="127" width="1" height="1"/>
<rect x="126" y="127" width="1" height="1"/>
<rect x="130" y="127" width="1" height="1"/>
<rect x="139" y="127" width="1" height="1"/>
<rect x="143" y="127" width="1" height="1"/>
<rect x="147" y="127" width="1" height="1"/>
<rect x="151" y="127" width="1" height="1"/>
<rect x="160" y="127" width="1" height="1"/>
<rect x="164" y="127" width="1" height="1"/>
<rect x="169" y="127" width="1" height="1"/>
<rect x="173" y="127" width="1" height="1"/>
<rect x="181" y="127" width="1" height="1"/>
<rect x="186" y="127" width="1" height="1"/>
<rect x="190" y="127" width="1" height="1"/>
<rect x="194" y="127" width="1" height="1"/>
<rect x="203" y="127" width="1" height="1"/>
<rect x="207" y="127" width="1" height="1"/>
<rect x="211" y="127" width="1" height="1"/>
<rect x="216" y="127" width="1" height="1"/>
<rect x="224" y="127" width="1" height="1"/>
<rect x="228" y="127" width="1" height="1"/>
<rect x="233" y="127" width="1" height="1"/>
<rect x="237" y="127" width="1" height="1"/>
<rect x="245" y="127" width="1" height="1"/>
<rect x="250" y="127" width="1" height="1"/>
<rect x="254" y="127" width="1" height="1"/>
<rect x="258" y="127" width="1" height="1"/>
<rect x="267" y="127" width="1" height="1"/>
<rect x="271" y="127" width="1" height="1"/>
<rect x="275" y="127" width="1" height="1"/>
<rect x="280" y="127" width="1" height="1"/>
<rect x="288" y="127" width="1" height="1"/>
<rect x="292" y="127" width="1" height="1"/>
<rect x="297" y="127" width="1" height="1"/>
<rect x="301" y="127" width="1" height="1"/>
<rect x="309" y="127" width="1" height="1"/>
<rect x="314" y="127" width="1" height="1"/>
<rect x="318" y="127" width="1" height="1"/>
<rect x="322" y="127" width="1" height="1"/>
<rect x="331" y="127" width="1" height="1"/>
<rect x="335" y="127" width="1" height="1"/>
<rect x="339" y="127" width="1" height="1"/>
<rect x="344" y="127" width="1" height="1"/>
<rect x="352" y="127" width="1" height="1"/>
<rect x="356" y="127" width="1" height="1"/>
<rect x="361" y="127" width="1" height="1"/>
<rect x="365" y="127" width="1" height="1"/>
<rect x="374" y="127" width="1" height="1"/>
<rect x="378" y="127" width="1" height="1"/>
<rect x="382" y="127" width="1" height="1"/>
<rect x="386" y="127" width="1" height="1"/>
<rect x="395" y="127" width="1" height="1"/>
<rect x="399" y="127" width="1" height="1"/>
<rect x="403" y="127" width="1" height="1"/>
<rect x="408" y="127" width="1" height="1"/>
<rect x="416" y="127" width="1" height="1"/>
<rect x="420" y="127" width="1" height="1"/>
<rect x="425" y="127" width="1" height="1"/>
<rect x="429" y="127" width="1" height="1"/>
<rect x="438" y="127" width="1" height="1"/>
<rect x="442" y="127" width="1" height="1"/>
<rect x="446" y="127" width="1" height="1"/>
<rect x="450" y="127" width="1" height="1"/>
<rect x="459" y="127" width="1" height="1"/>
<rect x="463" y="127" width="1" height="1"/>
<rect x="467" y="127" width="1" height="1"/>
<rect x="472" y="127" width="1" height="1"/>
<rect x="480" y="127" width="1" height="1"/>
<rect x="485" y="127" width="1" height="1"/>
<rect x="489" y="127" width="1" height="1"/>
<rect x="493" y="127" width="1" height="1"/>
<rect x="502" y="127" width="1" height="1"/>
<rect x="506" y="127" width="1" height="1"/>
<rect x="510" y="127" width="1" height="1"/>
<rect x="514" y="127" width="1" height="1"/>
<rect x="523" y="127" width="1" height="1"/>
<rect x="527" y="127" width="1" height="1"/>
<rect x="532" y="127" width="1" height="1"/>
<rect x="536" y="127" width="1" height="1"/>
<rect x="544" y="127" width="1" height="1"/>
<rect x="549" y="127" width="1" height="1"/>
<rect x="553" y="127" width="1" height="1"/>
<rect x="557" y="127" width="1" height="1"/>
<rect x="566" y="127" width="1" height="1"/>
<rect x="570" y="127" width="1" height="1"/>
<rect x="574" y="127" width="1" height="1"/>
<rect x="578" y="127" width="1" height="1"/>
<rect x="587" y="127" width="1" height="1"/>
<rect x="591" y="127" width="1" height="1"/>
<rect x="596" y="127" width="1" height="1"/>
<rect x="600" y="127" width="1" height="1"/>
<rect x="608" y="127" width="1" height="1"/>
<rect x="613" y="127" width="1" height="1"/>
<rect x="617" y="127" width="1" height="1"/>
<rect x="621" y="127" width="1" height="1"/>
<rect x="630" y="127" width="1" height="1"/>
<rect x="634" y="127" width="1" height="1"/>
<rect x="638" y="127" width="1" height="1"/>
<rect x="643" y="127" width="1" height="1"/>
<rect x="651" y="127" width="1" height="1"/>
<rect x="655" y="127" width="1" height="1"/>
<rect x="660" y="127" width="1" height="1"/>
<rect x="664" y="127" width="1" height="1"/>
<rect x="672" y="127" width="1" height="1"/>
<rect x="677" y="127" width="1" height="1"/>
<rect x="681" y="127" width="1" height="1"/>
<rect x="685" y="127" width="1" height="1"/>
<rect x="694" y="127" width="1" height="1"/>
<rect x="698" y="127" width="1" height="1"/>
<rect x="702" y="127" width="1" height="1"/>
<rect x="707" y="127" width="1" height="1"/>
<rect x="715" y="127" width="1" height="1"/>
<rect x="719" y="127" width="1" height="1"/>
<rect x="724" y="127" width="1" height="1"/>
<rect x="728" y="127" width="1" height="1"/>
<rect x="736" y="127" width="1" height="1"/>
<rect x="741" y="127" width="1" height="1"/>
<rect x="745" y="127" width="1" height="1"/>
<rect x="749" y="127" width="1" height="1"/>
<rect x="758" y="127" width="1" height="1"/>
<rect x="762" y="127" width="1" height="1"/>
<rect x="766" y="127" width="1" height="1"/>
<rect x="771" y="127" width="1" height="1"/>
<rect x="779" y="127" width="1" height="1"/>
<rect x="783" y="127" width="1" height="1"/>
<rect x="788" y="127" width="1" height="1"/>
<rect x="792" y="127" width="1" height="1"/>
<rect x="801" y="127" width="1" height="1"/>
<rect x="805" y="127" width="1" height="1"/>
<rect x="809" y="127" width="1" height="1"/>
<rect x="813" y="127" width="1" height="1"/>
<rect x="822" y="127" width="1" height="1"/>
<rect x="826" y="127" width="1" height="1"/>
<rect x="830" y="127" width="1" height="1"/>
<rect x="835" y="127" width="1" height="1"/>
<rect x="843" y="127" width="1" height="1"/>
<rect x="847" y="127" width="1" height="1"/>
<rect x="852" y="127" width="1" height="1"/>
<rect x="856" y="127" width="1" height="1"/>
<rect x="865" y="127" width="1" height="1"/>
<rect x="869" y="127" width="1" height="1"/>
<rect x="873" y="127" width="1" height="1"/>
<rect x="877" y="127" width="1" height="1"/>
<rect x="886" y="127" width="1" height="1"/>
<rect x="890" y="127" width="1" height="1"/>
<rect x="894" y="127" width="1" height="1"/>
<rect x="899" y="127" width="1" height="1"/>
<rect x="907" y="127" width="1" height="1"/>
<rect x="912" y="127" width="1" height="1"/>
<rect x="916" y="127" width="1" height="1"/>
<rect x="920" y="127" width="1" height="1"/>
<rect x="929" y="127" width="1" height="1"/>
<rect x="933" y="127" width="1" height="1"/>
<rect x="937" y="127" width="1" height="1"/>
<rect x="941" y="127" width="1" height="1"/>
<rect x="950" y="127" width="1" height="1"/>
<rect x="954" y="127" width="1" height="1"/>
<rect x="959" y="127" width="1" height="1"/>
<rect x="963" y="127" width="1" height="1"/>
<rect x="971" y="127" width="1" height="1"/>
<rect x="976" y="127" width="1" height="1"/>
<rect x="980" y="127" width="1" height="1"/>
<rect x="984" y="127" width="1" height="1"/>
<rect x="993" y="127" width="1" height="1"/>
<rect x="997" y="127" width="1" height="1"/>
<rect x="1001" y="127" width="1" height="1"/>
<rect x="1005" y="127" width="1" height="1"/>
<rect x="1014" y="127" width="1" height="1"/>
<rect x="1018" y="127" width="1" height="1"/>
<rect x="1023" y="127" width="1" height="1"/>
<rect x="1027" y="127" width="1" height="1"/>
<rect x="1035" y="127" width="1" height="1"/>
<rect x="1040" y="127" width="1" height="1"/>
<rect x="1044" y="127" width="1" height="1"/>
<rect x="1048" y="127" width="1" height="1"/>
<rect x="1057" y="127" width="1" height="1"/>
<rect x="1061" y="127" width="1" height="1"/>
<rect x="1065" y="127" width="1" height="1"/>
<rect x="1070" y="127" width="1" height="1"/>
<rect x="1078" y="127" width="1" height="1"/>
<rect x="1082" y="127" width="1" height="1"/>
<rect x="1087" y="127" width="1" height="1"/>
<rect x="1091" y="127" width="1" height="1"/>
<rect x="1099" y="127" width="1" height="1"/>
<rect x="1104" y="127" width="1" height="1"/>
<rect x="1108" y="127" width="1" height="1"/>
<rect x="1112" y="127" width="1" height="1"/>
<rect x="1121" y="127" width="1" height="1"/>
<rect x="1125" y="127" width="1" height="1"/>
<rect x="1129" y="127" width="1" height="1"/>
<rect x="1134" y="127" width="1" height="1"/>
<rect x="1142" y="127" width="1" height="1"/>
<rect x="1146" y="127" width="1" height="1"/>
<rect x="1151" y="127" width="1" height="1"/>
<rect x="1155" y="127" width="1" height="1"/>
<rect x="1163" y="127" width="1" height="1"/>
<rect x="1168" y="127" width="1" height="1"/>
<rect x="1172" y="127" width="1" height="1"/>
<rect x="1176" y="127" width="1" height="1"/>
<rect x="1185" y="127" width="1" height="1"/>
<rect x="1189" y="127" width="1" height="1"/>
<rect x="1193" y="127" width="1" height="1"/>
<rect x="1198" y="127" width="1" height="1"/>
<rect x="1206" y="127" width="1" height="1"/>
<rect x="1210" y="127" width="1" height="1"/>
<rect x="1215" y="127" width="1" height="1"/>
<rect x="1219" y="127" width="1" height="1"/>
<rect x="1228" y="127" width="1" height="1"/>
<rect x="1232" y="127" width="1" height="1"/>
<rect x="1236" y="127" width="1" height="1"/>
<rect x="1240" y="127" width="1" height="1"/>
<rect x="1249" y="127" width="1" height="1"/>
<rect x="1253" y="127" width="1" height="1"/>
<rect x="1257" y="127" width="1" height="1"/>
<rect x="1262" y="127" width="1" height="1"/>
<rect x="1270" y="127" width="1" height="1"/>
<rect x="1274" y="127" width="1" height="1"/>
<rect x="1279" y="127" width="1" height="1"/>
<rect x="1283" y="127" width="1" height="1"/>
<rect x="1292" y="127" width="1" height="1"/>
<rect x="1296" y="127" width="1" height="1"/>
<rect x="1300" y="127" width="1" height="1"/>
<rect x="1304" y="127" width="1" height="1"/>
<rect x="1313" y="127" width="1" height="1"/>
<rect x="1317" y="127" width="1" height="1"/>
<rect x="1321" y="127" width="1" height="1"/>
<rect x="1326" y="127" width="1" height="1"/>
</g>
<path d="M31 121 L37 127 M31 121 H34 M31 121 V124" stroke="#8a8a8a" stroke-width="1" fill="none"/>
<path d="M604.5 124 V128 M603.5 121 L605 123" stroke="#333" stroke-width="1"/>
<text x="1320" y="123" font-size="8" fill="#777" font-family="Liberation Sans">毫米</text>
</svg>
<svg class="a" style="left:26px;top:130px" width="16" height="511" viewBox="26 130 16 511">
<g fill="#8e8e8e" font-family="Liberation Sans" font-size="8.5" text-anchor="middle">
<text transform="translate(36 145.6) rotate(-90)" x="0" y="0">150</text>
<text transform="translate(36 188.3) rotate(-90)" x="0" y="0">140</text>
<text transform="translate(36 231.0) rotate(-90)" x="0" y="0">130</text>
<text transform="translate(36 273.7) rotate(-90)" x="0" y="0">120</text>
<text transform="translate(36 316.4) rotate(-90)" x="0" y="0">110</text>
<text transform="translate(36 359.1) rotate(-90)" x="0" y="0">100</text>
<text transform="translate(36 401.8) rotate(-90)" x="0" y="0">90</text>
<text transform="translate(36 444.5) rotate(-90)" x="0" y="0">80</text>
<text transform="translate(36 487.2) rotate(-90)" x="0" y="0">70</text>
<text transform="translate(36 529.9) rotate(-90)" x="0" y="0">60</text>
<text transform="translate(36 572.6) rotate(-90)" x="0" y="0">50</text>
<text transform="translate(36 615.3) rotate(-90)" x="0" y="0">40</text>
</g><g stroke="#777" stroke-width="1">
<path d="M37 145.5 H41"/>
<path d="M39 166.5 H41" stroke="#999"/>
<path d="M37 188.5 H41"/>
<path d="M39 209.5 H41" stroke="#999"/>
<path d="M37 231.5 H41"/>
<path d="M39 252.5 H41" stroke="#999"/>
<path d="M37 273.5 H41"/>
<path d="M39 295.5 H41" stroke="#999"/>
<path d="M37 316.5 H41"/>
<path d="M39 337.5 H41" stroke="#999"/>
<path d="M37 359.5 H41"/>
<path d="M39 380.5 H41" stroke="#999"/>
<path d="M37 401.5 H41"/>
<path d="M39 423.5 H41" stroke="#999"/>
<path d="M37 444.5 H41"/>
<path d="M39 465.5 H41" stroke="#999"/>
<path d="M37 487.5 H41"/>
<path d="M39 508.5 H41" stroke="#999"/>
<path d="M37 529.5 H41"/>
<path d="M39 551.5 H41" stroke="#999"/>
<path d="M37 572.5 H41"/>
<path d="M39 593.5 H41" stroke="#999"/>
<path d="M37 615.5 H41"/>
<path d="M39 636.5 H41" stroke="#999"/>
</g><g fill="#9a9a9a">
<rect x="39" y="132" width="1" height="1"/>
<rect x="39" y="137" width="1" height="1"/>
<rect x="39" y="141" width="1" height="1"/>
<rect x="39" y="149" width="1" height="1"/>
<rect x="39" y="154" width="1" height="1"/>
<rect x="39" y="158" width="1" height="1"/>
<rect x="39" y="162" width="1" height="1"/>
<rect x="39" y="171" width="1" height="1"/>
<rect x="39" y="175" width="1" height="1"/>
<rect x="39" y="179" width="1" height="1"/>
<rect x="39" y="184" width="1" height="1"/>
<rect x="39" y="192" width="1" height="1"/>
<rect x="39" y="196" width="1" height="1"/>
<rect x="39" y="201" width="1" height="1"/>
<rect x="39" y="205" width="1" height="1"/>
<rect x="39" y="213" width="1" height="1"/>
<rect x="39" y="218" width="1" height="1"/>
<rect x="39" y="222" width="1" height="1"/>
<rect x="39" y="226" width="1" height="1"/>
<rect x="39" y="235" width="1" height="1"/>
<rect x="39" y="239" width="1" height="1"/>
<rect x="39" y="243" width="1" height="1"/>
<rect x="39" y="248" width="1" height="1"/>
<rect x="39" y="256" width="1" height="1"/>
<rect x="39" y="260" width="1" height="1"/>
<rect x="39" y="265" width="1" height="1"/>
<rect x="39" y="269" width="1" height="1"/>
<rect x="39" y="277" width="1" height="1"/>
<rect x="39" y="282" width="1" height="1"/>
<rect x="39" y="286" width="1" height="1"/>
<rect x="39" y="290" width="1" height="1"/>
<rect x="39" y="299" width="1" height="1"/>
<rect x="39" y="303" width="1" height="1"/>
<rect x="39" y="307" width="1" height="1"/>
<rect x="39" y="312" width="1" height="1"/>
<rect x="39" y="320" width="1" height="1"/>
<rect x="39" y="324" width="1" height="1"/>
<rect x="39" y="329" width="1" height="1"/>
<rect x="39" y="333" width="1" height="1"/>
<rect x="39" y="342" width="1" height="1"/>
<rect x="39" y="346" width="1" height="1"/>
<rect x="39" y="350" width="1" height="1"/>
<rect x="39" y="354" width="1" height="1"/>
<rect x="39" y="363" width="1" height="1"/>
<rect x="39" y="367" width="1" height="1"/>
<rect x="39" y="371" width="1" height="1"/>
<rect x="39" y="376" width="1" height="1"/>
<rect x="39" y="384" width="1" height="1"/>
<rect x="39" y="388" width="1" height="1"/>
<rect x="39" y="393" width="1" height="1"/>
<rect x="39" y="397" width="1" height="1"/>
<rect x="39" y="406" width="1" height="1"/>
<rect x="39" y="410" width="1" height="1"/>
<rect x="39" y="414" width="1" height="1"/>
<rect x="39" y="418" width="1" height="1"/>
<rect x="39" y="427" width="1" height="1"/>
<rect x="39" y="431" width="1" height="1"/>
<rect x="39" y="435" width="1" height="1"/>
<rect x="39" y="440" width="1" height="1"/>
<rect x="39" y="448" width="1" height="1"/>
<rect x="39" y="453" width="1" height="1"/>
<rect x="39" y="457" width="1" height="1"/>
<rect x="39" y="461" width="1" height="1"/>
<rect x="39" y="470" width="1" height="1"/>
<rect x="39" y="474" width="1" height="1"/>
<rect x="39" y="478" width="1" height="1"/>
<rect x="39" y="482" width="1" height="1"/>
<rect x="39" y="491" width="1" height="1"/>
<rect x="39" y="495" width="1" height="1"/>
<rect x="39" y="500" width="1" height="1"/>
<rect x="39" y="504" width="1" height="1"/>
<rect x="39" y="512" width="1" height="1"/>
<rect x="39" y="517" width="1" height="1"/>
<rect x="39" y="521" width="1" height="1"/>
<rect x="39" y="525" width="1" height="1"/>
<rect x="39" y="534" width="1" height="1"/>
<rect x="39" y="538" width="1" height="1"/>
<rect x="39" y="542" width="1" height="1"/>
<rect x="39" y="546" width="1" height="1"/>
<rect x="39" y="555" width="1" height="1"/>
<rect x="39" y="559" width="1" height="1"/>
<rect x="39" y="564" width="1" height="1"/>
<rect x="39" y="568" width="1" height="1"/>
<rect x="39" y="576" width="1" height="1"/>
<rect x="39" y="581" width="1" height="1"/>
<rect x="39" y="585" width="1" height="1"/>
<rect x="39" y="589" width="1" height="1"/>
<rect x="39" y="598" width="1" height="1"/>
<rect x="39" y="602" width="1" height="1"/>
<rect x="39" y="606" width="1" height="1"/>
<rect x="39" y="611" width="1" height="1"/>
<rect x="39" y="619" width="1" height="1"/>
<rect x="39" y="623" width="1" height="1"/>
<rect x="39" y="628" width="1" height="1"/>
<rect x="39" y="632" width="1" height="1"/>
<rect x="39" y="640" width="1" height="1"/>
</g>
<path d="M27 228.5 H41" stroke="#444" stroke-dasharray="2 1.5"/>
</svg>
<!-- canvas -->
<div class="a" style="left:42px;top:130px;width:1281px;height:511px;background:#fff"></div>
<!-- page border -->
<div class="a" style="left:49px;top:146px;width:1270px;height:500px;border:1px solid #9a9a9a;border-right:none"></div>
<div class="a" style="left:1318px;top:150px;width:5px;height:491px;background:#bdbdbd"></div>
<svg class="a" style="left:480px;top:260px" width="220" height="280" viewBox="480 260 220 280">
<defs><filter id="rnd" x="-10%" y="-10%" width="120%" height="120%"><feGaussianBlur stdDeviation="1.3"/><feComponentTransfer><feFuncA type="linear" slope="5" intercept="-2.2"/></feComponentTransfer></filter><clipPath id="ec"><ellipse cx="591.5" cy="402" rx="86.5" ry="119.5"/></clipPath></defs>
<g filter="url(#rnd)"><g clip-path="url(#ec)" fill="#f9cf00">
<rect x="479.42" y="280.58" width="24.3" height="24.3" rx="4.5" transform="rotate(45 491.57 292.73)"/>
<rect x="478.20" y="320.16" width="24.3" height="24.3" rx="4.5" transform="rotate(45 490.35 332.31)"/>
<rect x="476.98" y="359.74" width="24.3" height="24.3" rx="4.5" transform="rotate(45 489.13 371.89)"/>
<rect x="475.76" y="399.32" width="24.3" height="24.3" rx="4.5" transform="rotate(45 487.91 411.47)"/>
<rect x="474.54" y="438.90" width="24.3" height="24.3" rx="4.5" transform="rotate(45 486.69 451.05)"/>
<rect x="499.79" y="260.40" width="24.3" height="24.3" rx="4.5" transform="rotate(45 511.94 272.55)"/>
<rect x="498.57" y="299.98" width="24.3" height="24.3" rx="4.5" transform="rotate(45 510.72 312.13)"/>
<rect x="497.35" y="339.56" width="24.3" height="24.3" rx="4.5" transform="rotate(45 509.50 351.71)"/>
<rect x="496.13" y="379.14" width="24.3" height="24.3" rx="4.5" transform="rotate(45 508.28 391.29)"/>
<rect x="494.91" y="418.72" width="24.3" height="24.3" rx="4.5" transform="rotate(45 507.06 430.87)"/>
<rect x="493.69" y="458.30" width="24.3" height="24.3" rx="4.5" transform="rotate(45 505.84 470.45)"/>
<rect x="492.47" y="497.88" width="24.3" height="24.3" rx="4.5" transform="rotate(45 504.62 510.03)"/>
<rect x="518.94" y="279.80" width="24.3" height="24.3" rx="4.5" transform="rotate(45 531.09 291.95)"/>
<rect x="517.72" y="319.38" width="24.3" height="24.3" rx="4.5" transform="rotate(45 529.87 331.53)"/>
<rect x="516.50" y="358.96" width="24.3" height="24.3" rx="4.5" transform="rotate(45 528.65 371.11)"/>
<rect x="515.28" y="398.54" width="24.3" height="24.3" rx="4.5" transform="rotate(45 527.43 410.69)"/>
<rect x="514.06" y="438.12" width="24.3" height="24.3" rx="4.5" transform="rotate(45 526.21 450.27)"/>
<rect x="512.84" y="477.70" width="24.3" height="24.3" rx="4.5" transform="rotate(45 524.99 489.85)"/>
<rect x="511.62" y="517.28" width="24.3" height="24.3" rx="4.5" transform="rotate(45 523.77 529.43)"/>
<rect x="539.31" y="259.62" width="24.3" height="24.3" rx="4.5" transform="rotate(45 551.46 271.77)"/>
<rect x="538.09" y="299.20" width="24.3" height="24.3" rx="4.5" transform="rotate(45 550.24 311.35)"/>
<rect x="536.87" y="338.78" width="24.3" height="24.3" rx="4.5" transform="rotate(45 549.02 350.93)"/>
<rect x="535.65" y="378.36" width="24.3" height="24.3" rx="4.5" transform="rotate(45 547.80 390.51)"/>
<rect x="534.43" y="417.94" width="24.3" height="24.3" rx="4.5" transform="rotate(45 546.58 430.09)"/>
<rect x="533.21" y="457.52" width="24.3" height="24.3" rx="4.5" transform="rotate(45 545.36 469.67)"/>
<rect x="531.99" y="497.10" width="24.3" height="24.3" rx="4.5" transform="rotate(45 544.14 509.25)"/>
<rect x="558.46" y="279.02" width="24.3" height="24.3" rx="4.5" transform="rotate(45 570.61 291.17)"/>
<rect x="557.24" y="318.60" width="24.3" height="24.3" rx="4.5" transform="rotate(45 569.39 330.75)"/>
<rect x="556.02" y="358.18" width="24.3" height="24.3" rx="4.5" transform="rotate(45 568.17 370.33)"/>
<rect x="554.80" y="397.76" width="24.3" height="24.3" rx="4.5" transform="rotate(45 566.95 409.91)"/>
<rect x="553.58" y="437.34" width="24.3" height="24.3" rx="4.5" transform="rotate(45 565.73 449.49)"/>
<rect x="552.36" y="476.92" width="24.3" height="24.3" rx="4.5" transform="rotate(45 564.51 489.07)"/>
<rect x="551.14" y="516.50" width="24.3" height="24.3" rx="4.5" transform="rotate(45 563.29 528.65)"/>
<rect x="578.83" y="258.84" width="24.3" height="24.3" rx="4.5" transform="rotate(45 590.98 270.99)"/>
<rect x="577.61" y="298.42" width="24.3" height="24.3" rx="4.5" transform="rotate(45 589.76 310.57)"/>
<rect x="576.39" y="338.00" width="24.3" height="24.3" rx="4.5" transform="rotate(45 588.54 350.15)"/>
<rect x="575.17" y="377.58" width="24.3" height="24.3" rx="4.5" transform="rotate(45 587.32 389.73)"/>
<rect x="573.95" y="417.16" width="24.3" height="24.3" rx="4.5" transform="rotate(45 586.10 429.31)"/>
<rect x="572.73" y="456.74" width="24.3" height="24.3" rx="4.5" transform="rotate(45 584.88 468.89)"/>
<rect x="571.51" y="496.32" width="24.3" height="24.3" rx="4.5" transform="rotate(45 583.66 508.47)"/>
<rect x="597.98" y="278.24" width="24.3" height="24.3" rx="4.5" transform="rotate(45 610.13 290.39)"/>
<rect x="596.76" y="317.82" width="24.3" height="24.3" rx="4.5" transform="rotate(45 608.91 329.97)"/>
<rect x="595.54" y="357.40" width="24.3" height="24.3" rx="4.5" transform="rotate(45 607.69 369.55)"/>
<rect x="594.32" y="396.98" width="24.3" height="24.3" rx="4.5" transform="rotate(45 606.47 409.13)"/>
<rect x="593.10" y="436.56" width="24.3" height="24.3" rx="4.5" transform="rotate(45 605.25 448.71)"/>
<rect x="591.88" y="476.14" width="24.3" height="24.3" rx="4.5" transform="rotate(45 604.03 488.29)"/>
<rect x="590.66" y="515.72" width="24.3" height="24.3" rx="4.5" transform="rotate(45 602.81 527.87)"/>
<rect x="618.35" y="258.06" width="24.3" height="24.3" rx="4.5" transform="rotate(45 630.50 270.21)"/>
<rect x="617.13" y="297.64" width="24.3" height="24.3" rx="4.5" transform="rotate(45 629.28 309.79)"/>
<rect x="615.91" y="337.22" width="24.3" height="24.3" rx="4.5" transform="rotate(45 628.06 349.37)"/>
<rect x="614.69" y="376.80" width="24.3" height="24.3" rx="4.5" transform="rotate(45 626.84 388.95)"/>
<rect x="613.47" y="416.38" width="24.3" height="24.3" rx="4.5" transform="rotate(45 625.62 428.53)"/>
<rect x="612.25" y="455.96" width="24.3" height="24.3" rx="4.5" transform="rotate(45 624.40 468.11)"/>
<rect x="611.03" y="495.54" width="24.3" height="24.3" rx="4.5" transform="rotate(45 623.18 507.69)"/>
<rect x="637.50" y="277.46" width="24.3" height="24.3" rx="4.5" transform="rotate(45 649.65 289.61)"/>
<rect x="636.28" y="317.04" width="24.3" height="24.3" rx="4.5" transform="rotate(45 648.43 329.19)"/>
<rect x="635.06" y="356.62" width="24.3" height="24.3" rx="4.5" transform="rotate(45 647.21 368.77)"/>
<rect x="633.84" y="396.20" width="24.3" height="24.3" rx="4.5" transform="rotate(45 645.99 408.35)"/>
<rect x="632.62" y="435.78" width="24.3" height="24.3" rx="4.5" transform="rotate(45 644.77 447.93)"/>
<rect x="631.40" y="475.36" width="24.3" height="24.3" rx="4.5" transform="rotate(45 643.55 487.51)"/>
<rect x="630.18" y="514.94" width="24.3" height="24.3" rx="4.5" transform="rotate(45 642.33 527.09)"/>
<rect x="657.87" y="257.28" width="24.3" height="24.3" rx="4.5" transform="rotate(45 670.02 269.43)"/>
<rect x="656.65" y="296.86" width="24.3" height="24.3" rx="4.5" transform="rotate(45 668.80 309.01)"/>
<rect x="655.43" y="336.44" width="24.3" height="24.3" rx="4.5" transform="rotate(45 667.58 348.59)"/>
<rect x="654.21" y="376.02" width="24.3" height="24.3" rx="4.5" transform="rotate(45 666.36 388.17)"/>
<rect x="652.99" y="415.60" width="24.3" height="24.3" rx="4.5" transform="rotate(45 665.14 427.75)"/>
<rect x="651.77" y="455.18" width="24.3" height="24.3" rx="4.5" transform="rotate(45 663.92 467.33)"/>
<rect x="650.55" y="494.76" width="24.3" height="24.3" rx="4.5" transform="rotate(45 662.70 506.91)"/>
<rect x="677.02" y="276.68" width="24.3" height="24.3" rx="4.5" transform="rotate(45 689.17 288.83)"/>
<rect x="675.80" y="316.26" width="24.3" height="24.3" rx="4.5" transform="rotate(45 687.95 328.41)"/>
<rect x="674.58" y="355.84" width="24.3" height="24.3" rx="4.5" transform="rotate(45 686.73 367.99)"/>
<rect x="673.36" y="395.42" width="24.3" height="24.3" rx="4.5" transform="rotate(45 685.51 407.57)"/>
<rect x="672.14" y="435.00" width="24.3" height="24.3" rx="4.5" transform="rotate(45 684.29 447.15)"/>
<rect x="670.92" y="474.58" width="24.3" height="24.3" rx="4.5" transform="rotate(45 683.07 486.73)"/>
<rect x="669.70" y="514.16" width="24.3" height="24.3" rx="4.5" transform="rotate(45 681.85 526.31)"/>
</g></g>
<rect x="498.5" y="276" width="6" height="6" fill="#000"/>
<rect x="498.5" y="399.5" width="6" height="6" fill="#000"/>
<rect x="498.5" y="522" width="6" height="6" fill="#000"/>
<rect x="589.5" y="276" width="6" height="6" fill="#000"/>
<rect x="589.5" y="522" width="6" height="6" fill="#000"/>
<rect x="680" y="276" width="6" height="6" fill="#000"/>
<rect x="680" y="399.5" width="6" height="6" fill="#000"/>
<rect x="680" y="522" width="6" height="6" fill="#000"/>
<path d="M590.5 400 L594.5 404 M594.5 400 L590.5 404" stroke="#000" stroke-width="1.3"/>
<g fill="#fff" stroke="#222" stroke-width="1">
<rect x="584.5" y="281.5" width="4" height="4"/>
<rect x="582.5" y="285.5" width="4" height="4"/>
<rect x="594.5" y="292.5" width="4" height="4"/>
<rect x="627.5" y="290.5" width="4" height="4"/>
<rect x="562.5" y="305.5" width="4" height="4"/>
<rect x="574.5" y="312.5" width="4" height="4"/>
<rect x="644.5" y="312.5" width="4" height="4"/>
<rect x="542.5" y="327.5" width="4" height="4"/>
<rect x="553.5" y="332.5" width="4" height="4"/>
<rect x="620.5" y="323.5" width="4" height="4"/>
<rect x="623.5" y="332.5" width="4" height="4"/>
<rect x="658.5" y="336.5" width="4" height="4"/>
<rect x="520.5" y="346.5" width="4" height="4"/>
<rect x="524.5" y="356.5" width="4" height="4"/>
<rect x="600.5" y="344.5" width="4" height="4"/>
<rect x="549.5" y="363.5" width="4" height="4"/>
<rect x="552.5" y="372.5" width="4" height="4"/>
<rect x="658.5" y="361.5" width="4" height="4"/>
<rect x="673.5" y="361.5" width="4" height="4"/>
<rect x="662.5" y="371.5" width="4" height="4"/>
<rect x="622.5" y="372.5" width="4" height="4"/>
<rect x="519.5" y="386.5" width="4" height="4"/>
<rect x="522.5" y="396.5" width="4" height="4"/>
<rect x="599.5" y="385.5" width="4" height="4"/>
<rect x="608.5" y="381.5" width="4" height="4"/>
<rect x="547.5" y="403.5" width="4" height="4"/>
<rect x="550.5" y="411.5" width="4" height="4"/>
<rect x="657.5" y="401.5" width="4" height="4"/>
<rect x="667.5" y="405.5" width="4" height="4"/>
<rect x="660.5" y="411.5" width="4" height="4"/>
<rect x="622.5" y="412.5" width="4" height="4"/>
<rect x="606.5" y="421.5" width="4" height="4"/>
<rect x="518.5" y="426.5" width="4" height="4"/>
<rect x="520.5" y="436.5" width="4" height="4"/>
<rect x="530.5" y="432.5" width="4" height="4"/>
<rect x="640.5" y="432.5" width="4" height="4"/>
<rect x="673.5" y="436.5" width="4" height="4"/>
<rect x="585.5" y="441.5" width="4" height="4"/>
<rect x="588.5" y="450.5" width="4" height="4"/>
<rect x="579.5" y="453.5" width="4" height="4"/>
<rect x="549.5" y="451.5" width="4" height="4"/>
<rect x="539.5" y="455.5" width="4" height="4"/>
<rect x="619.5" y="451.5" width="4" height="4"/>
<rect x="667.5" y="452.5" width="4" height="4"/>
<rect x="519.5" y="470.5" width="4" height="4"/>
<rect x="654.5" y="480.5" width="4" height="4"/>
<rect x="538.5" y="488.5" width="4" height="4"/>
<rect x="548.5" y="491.5" width="4" height="4"/>
<rect x="557.5" y="508.5" width="4" height="4"/>
<rect x="564.5" y="513.5" width="4" height="4"/>
<rect x="604.5" y="499.5" width="4" height="4"/>
<rect x="633.5" y="499.5" width="4" height="4"/>
<rect x="587.5" y="517.5" width="4" height="4"/>
<rect x="608.5" y="516.5" width="4" height="4"/>
</g></svg>
<!-- v scrollbar -->
<div class="a" style="left:1323px;top:130px;width:17px;height:511px;background:#fff"></div>

<!-- v scrollbar content -->
<div class="a" style="left:1325px;top:130px;width:13px;height:14px;background:#eeeeee"></div>
<svg class="a" style="left:1325px;top:130px" width="13" height="14"><path d="M3.5 9 L6.5 6 L9.5 9 Z" fill="#222"/></svg>
<div class="a" style="left:1325px;top:314px;width:13px;height:305px;background:linear-gradient(90deg,#f6f6f6,#dadada 60%,#bdbdbd);border:1px solid #a8a8a8;border-left-color:#9a9a9a;border-right:none"></div>
<svg class="a" style="left:1325px;top:460px" width="13" height="10"><path d="M4 2.5 H9 M4 4.5 H9 M4 6.5 H9" stroke="#666" stroke-width="1"/></svg>
<div class="a" style="left:1340px;top:129px;width:1px;height:512px;background:#d8d8d8"></div>
<!-- docker -->
<div class="a" style="left:1340px;top:98px;width:260px;height:543px;background:#f3f3f3;border-left:1px solid #d4d4d4"></div>

<!-- docker content -->
<div class="a" style="left:1341px;top:97px;width:239px;height:17px;background:#e9e9e9;border-bottom:1px solid #d4d4d4"></div>
<div class="t" style="left:1344px;top:100px;font-size:10px;color:#222">圆角/扇形角/倒棱角</div>
<div class="a" style="left:1557px;top:102px;width:6px;height:8px;border:1px solid #bdbdbd"></div>
<div class="a" style="left:1572px;top:102px;width:6px;height:8px;border:1px solid #bdbdbd"></div>
<div class="a" style="left:1566px;top:114px;width:1px;height:527px;background:#8fd0ec"></div>
<div class="a" style="left:1567px;top:114px;width:17px;height:527px;background:#dedede"></div>
<!-- radios -->
<div class="a" style="left:1346px;top:121px;width:10px;height:10px;border-radius:50%;background:#fff;border:1px solid #c8c8c8"></div>
<div class="a" style="left:1349px;top:124px;width:4px;height:4px;border-radius:50%;background:#111"></div>
<div class="a" style="left:1346px;top:141px;width:10px;height:10px;border-radius:50%;background:#fff;border:1px solid #c8c8c8"></div>
<div class="a" style="left:1346px;top:160px;width:10px;height:10px;border-radius:50%;background:#fff;border:1px solid #c8c8c8"></div>
<div class="t" style="left:1359px;top:120px;font-size:10.5px">圆角<span style="font-size:10px;letter-spacing:-0.5px">(<u>F</u>)</span></div>
<div class="t" style="left:1359px;top:140px;font-size:10.5px">扇形角<span style="font-size:10px;letter-spacing:-0.5px">(<u>S</u>)</span></div>
<div class="t" style="left:1359px;top:159px;font-size:10.5px">倒棱角<span style="font-size:10px;letter-spacing:-0.5px">(<u>M</u>)</span></div>
<!-- preview -->
<div class="a" style="left:1508px;top:118px;width:55px;height:55px;background:#fff;border:1px solid #a8a8a8"></div>
<svg class="a" style="left:1508px;top:118px" width="55" height="55" viewBox="0 0 55 55">
 <path d="M13.7 16.6 H26 M13.7 16.6 V28" stroke="#aaa" stroke-dasharray="1 1" fill="none"/>
 <path d="M13.7 45 V27.6 A11 11 0 0 1 24.7 16.6 H44" fill="none" stroke="#444" stroke-width="1.2"/>
 <path d="M13.7 27.6 A11 11 0 0 1 24.7 16.6" fill="none" stroke="#d8506e" stroke-width="1.2"/>
 <path d="M17.5 20.5 L31 32 M17.5 20.5 L18 24.5 M17.5 20.5 L21.5 21" fill="none" stroke="#4a6aa8" stroke-width="1.1"/>
 <text x="30.5" y="27.5" font-size="10" font-weight="bold" fill="#2f4f8f" font-family="Liberation Sans">r</text>
</svg>
<div class="a" style="left:1346px;top:178px;width:216px;height:1px;background:#dcdcdc"></div>
<div class="t" style="left:1359px;top:188px;font-size:10.5px">半径<span style="font-size:10px;letter-spacing:-0.3px">(R):</span></div>
<div class="a" style="left:1398px;top:184px;width:87px;height:20px;background:#fff;border:1px solid #bdbdbd"></div>
<div class="a" style="left:1470px;top:185px;width:14px;height:18px;background:#f0f0f0;border-left:1px solid #d0d0d0"></div>
<svg class="a" style="left:1470px;top:185px" width="14" height="18"><path d="M4.5 7 L7 4.5 L9.5 7 Z M4.5 11 L7 13.5 L9.5 11 Z" fill="#222"/></svg>
<div class="t" style="left:1401px;top:188px;font-size:10px;color:#222">1.0 mm</div>
<div class="a" style="left:1408px;top:209px;width:154px;height:1px;background:#dcdcdc"></div>
<div class="t" style="left:1346px;top:209px;font-size:10px">扇形角距离</div>
<div class="t" style="left:1372px;top:230px;font-size:10px;color:#b0b0b0">A(A):</div>
<div class="t" style="left:1372px;top:257px;font-size:10px;color:#b0b0b0">B(B):</div>
<div class="a" style="left:1398px;top:226px;width:87px;height:21px;background:#f2f2f2;border:1px solid #d6d6d6"></div>
<div class="a" style="left:1470px;top:227px;width:1px;height:19px;background:#dcdcdc"></div>
<div class="t" style="left:1401px;top:230px;font-size:10px;color:#a8a8a8">12.7 mm</div>
<div class="a" style="left:1398px;top:253px;width:87px;height:21px;background:#f2f2f2;border:1px solid #d6d6d6"></div>
<div class="a" style="left:1470px;top:254px;width:1px;height:19px;background:#dcdcdc"></div>
<div class="t" style="left:1401px;top:257px;font-size:10px;color:#a8a8a8">12.7 mm</div>
<svg class="a" style="left:1470px;top:226px" width="34" height="48"><path d="M4.5 8 L7 5.5 L9.5 8 M4.5 14 L7 16.5 L9.5 14 M4.5 35 L7 32.5 L9.5 35 M4.5 41 L7 43.5 L9.5 41" fill="none" stroke="#cfcfcf"/>
<path d="M20 7.5 H25 V11 M20 40.5 H25 V37" fill="none" stroke="#888" stroke-width="1"/>
<rect x="23" y="21" width="5" height="4" fill="#aaa"/><path d="M24 21 V18.5 A1.5 1.5 0 0 1 27 18.5 V21" fill="none" stroke="#aaa"/></svg>
<div class="a" style="left:1346px;top:280px;width:216px;height:1px;background:#dcdcdc"></div>
<div class="a" style="left:1497px;top:285px;width:66px;height:19px;background:#e6e6e6;border:1px solid #c4c4c4"></div>
<div class="t" style="left:1520px;top:288px;font-size:10px">应用</div>
<!-- palette -->
<div class="a" style="left:1584px;top:98px;width:16px;height:543px;background:#f3f3f3"></div>
<svg class="a" style="left:1582px;top:97px" width="18" height="54"><path d="M8 12 L12 15.5 L8 19 Z" fill="#111"/><path d="M6 36 L12 30" stroke="#c8c8c8" stroke-width="2.2"/><circle cx="13" cy="29" r="1.8" fill="#c8c8c8"/></svg>
<svg class="a" style="left:1584px;top:151px" width="15" height="490" viewBox="1584 151 15 490">
<rect x="1584.5" y="151.5" width="14" height="14" fill="#fff" stroke="#333"/><path d="M1585 152 L1598 165 M1598 152 L1585 165" stroke="#333" stroke-width="0.9"/>
<rect x="1584" y="165.20" width="15" height="14.4" fill="#231815"/>
<rect x="1584" y="179.40" width="15" height="14.4" fill="#3e3a39"/>
<rect x="1584" y="193.60" width="15" height="14.4" fill="#595757"/>
<rect x="1584" y="207.80" width="15" height="14.4" fill="#727171"/>
<rect x="1584" y="222.00" width="15" height="14.4" fill="#898989"/>
<rect x="1584" y="236.20" width="15" height="14.4" fill="#9fa0a0"/>
<rect x="1584" y="250.40" width="15" height="14.4" fill="#b5b5b6"/>
<rect x="1584" y="264.60" width="15" height="14.4" fill="#c9caca"/>
<rect x="1584" y="278.80" width="15" height="14.4" fill="#dcdddd"/>
<rect x="1584.5" y="279.30" width="14" height="13.2" fill="none" stroke="#d0d0d0" stroke-width="0.8"/>
<rect x="1584" y="293.00" width="15" height="14.4" fill="#efefef"/>
<rect x="1584.5" y="293.50" width="14" height="13.2" fill="none" stroke="#d0d0d0" stroke-width="0.8"/>
<rect x="1584" y="307.20" width="15" height="14.4" fill="#ffffff"/>
<rect x="1584.5" y="307.70" width="14" height="13.2" fill="none" stroke="#d0d0d0" stroke-width="0.8"/>
<rect x="1584" y="321.40" width="15" height="14.4" fill="#1d2088"/>
<rect x="1584" y="335.60" width="15" height="14.4" fill="#00a0e9"/>
<rect x="1584" y="349.80" width="15" height="14.4" fill="#009944"/>
<rect x="1584" y="364.00" width="15" height="14.4" fill="#fff100"/>
<rect x="1584" y="378.20" width="15" height="14.4" fill="#e60012"/>
<rect x="1584" y="392.40" width="15" height="14.4" fill="#e4007f"/>
<rect x="1584" y="406.60" width="15" height="14.4" fill="#a83f8c"/>
<rect x="1584" y="420.80" width="15" height="14.4" fill="#f39800"/>
<rect x="1584" y="435.00" width="15" height="14.4" fill="#f5b2b2"/>
<rect x="1584" y="449.20" width="15" height="14.4" fill="#8c7b72"/>
<rect x="1584" y="463.40" width="15" height="14.4" fill="#dcd6ec"/>
<rect x="1584" y="477.60" width="15" height="14.4" fill="#a59aca"/>
<rect x="1584" y="491.80" width="15" height="14.4" fill="#6f8ed2"/>
<rect x="1584" y="506.00" width="15" height="14.4" fill="#6d5fb0"/>
<rect x="1584" y="520.20" width="15" height="14.4" fill="#8a7fb4"/>
<rect x="1584" y="534.40" width="15" height="14.4" fill="#4d5e8e"/>
<rect x="1584" y="548.60" width="15" height="14.4" fill="#544f72"/>
<rect x="1584" y="562.80" width="15" height="14.4" fill="#7088a8"/>
<rect x="1584" y="577.00" width="15" height="14.4" fill="#0b8bd3"/>
<rect x="1584" y="591.20" width="15" height="14.4" fill="#a8d4f2"/>
<rect x="1584" y="605.40" width="15" height="14.4" fill="#b3c6d1"/>
<rect x="1584" y="619.60" width="15" height="14.4" fill="#9aa7ae"/>
<rect x="1584" y="633.80" width="15" height="14.4" fill="#7d8b93"/>
</svg>
<svg class="a" style="left:1566px;top:114px" width="18" height="527" viewBox="1566 114 18 527">
 <path d="M1569 118 L1569 128.5 L1571.3 126.3 L1573 130 L1574.6 129.2 L1572.9 125.6 L1576 125.3 Z" fill="#333"/>
 <g font-family="Liberation Sans" font-size="10.5" fill="#2a2a2a">
  <text transform="translate(1570 133) rotate(90)">提示<tspan font-size="9.5">(N)</tspan></text>
  <text transform="translate(1570 205) rotate(90)">对象管理器</text>
  <text transform="translate(1570 290) rotate(90)">对齐与分布</text>
  <text transform="translate(1570 378) rotate(90)">字体乐园</text>
  <text transform="translate(1570 455) rotate(90)">文本属性</text>
  <text transform="translate(1570 557) rotate(90)">鸽</text>
 </g>
 <path d="M1570.5 187 V195 M1577.5 187 V195 M1570.5 191 H1577.5" stroke="#333" stroke-width="1.2"/>
 <path d="M1572 198 V200 M1575 198 V200" stroke="#666" stroke-width="0.8"/>
 <rect x="1570.5" y="273.5" width="7" height="8" fill="none" stroke="#444"/>
 <path d="M1571 277.5 H1577" stroke="#1e8ab4"/>
 <text x="1569" y="366" font-size="7" fill="#333" font-family="Liberation Sans">A</text>
 <path d="M1574 371 L1577 367 L1580 371 M1575 375 L1579 372" stroke="#444" fill="none" stroke-width="0.9"/>
 <text x="1569" y="442" font-size="7" fill="#333" font-family="Liberation Sans">A</text>
 <circle cx="1577" cy="447" r="2" fill="#fff" stroke="#333" stroke-width="1.3"/>
 <path d="M1571.5 515 V517.5 M1571.5 520 V522.5 M1574 525.5 H1577 M1571.5 525.5 H1572" stroke="#222" stroke-width="1.4"/>
 <circle cx="1574.5" cy="543.5" r="5.2" fill="#fff" stroke="#222" stroke-width="1.2"/>
 <path d="M1570 546 A5 5 0 0 0 1579 546" fill="#888"/>
 <rect x="1567" y="576" width="17" height="65" fill="#cde6f7"/>
 <path d="M1569.5 579.5 V591.5 H1580.5 V582 L1578 579.5 Z M1570 591 L1580 581" fill="none" stroke="#333" stroke-width="1"/>
 <text transform="translate(1570 596) rotate(90)" font-family="Liberation Sans" font-size="10.5" fill="#222">圆角/扇形</text>
</svg>

<!-- red boxes -->
<svg class="a" style="left:0;top:0" width="1600" height="641" viewBox="0 0 1600 641">
<rect x="479.1" y="4.8" width="52.05" height="33.75" fill="none" stroke="#f23434" stroke-width="5.7"/>
<rect x="1306.1" y="87.3" width="273.1" height="235" fill="none" stroke="#f23434" stroke-width="5.4"/>
</svg>
</body></html>
